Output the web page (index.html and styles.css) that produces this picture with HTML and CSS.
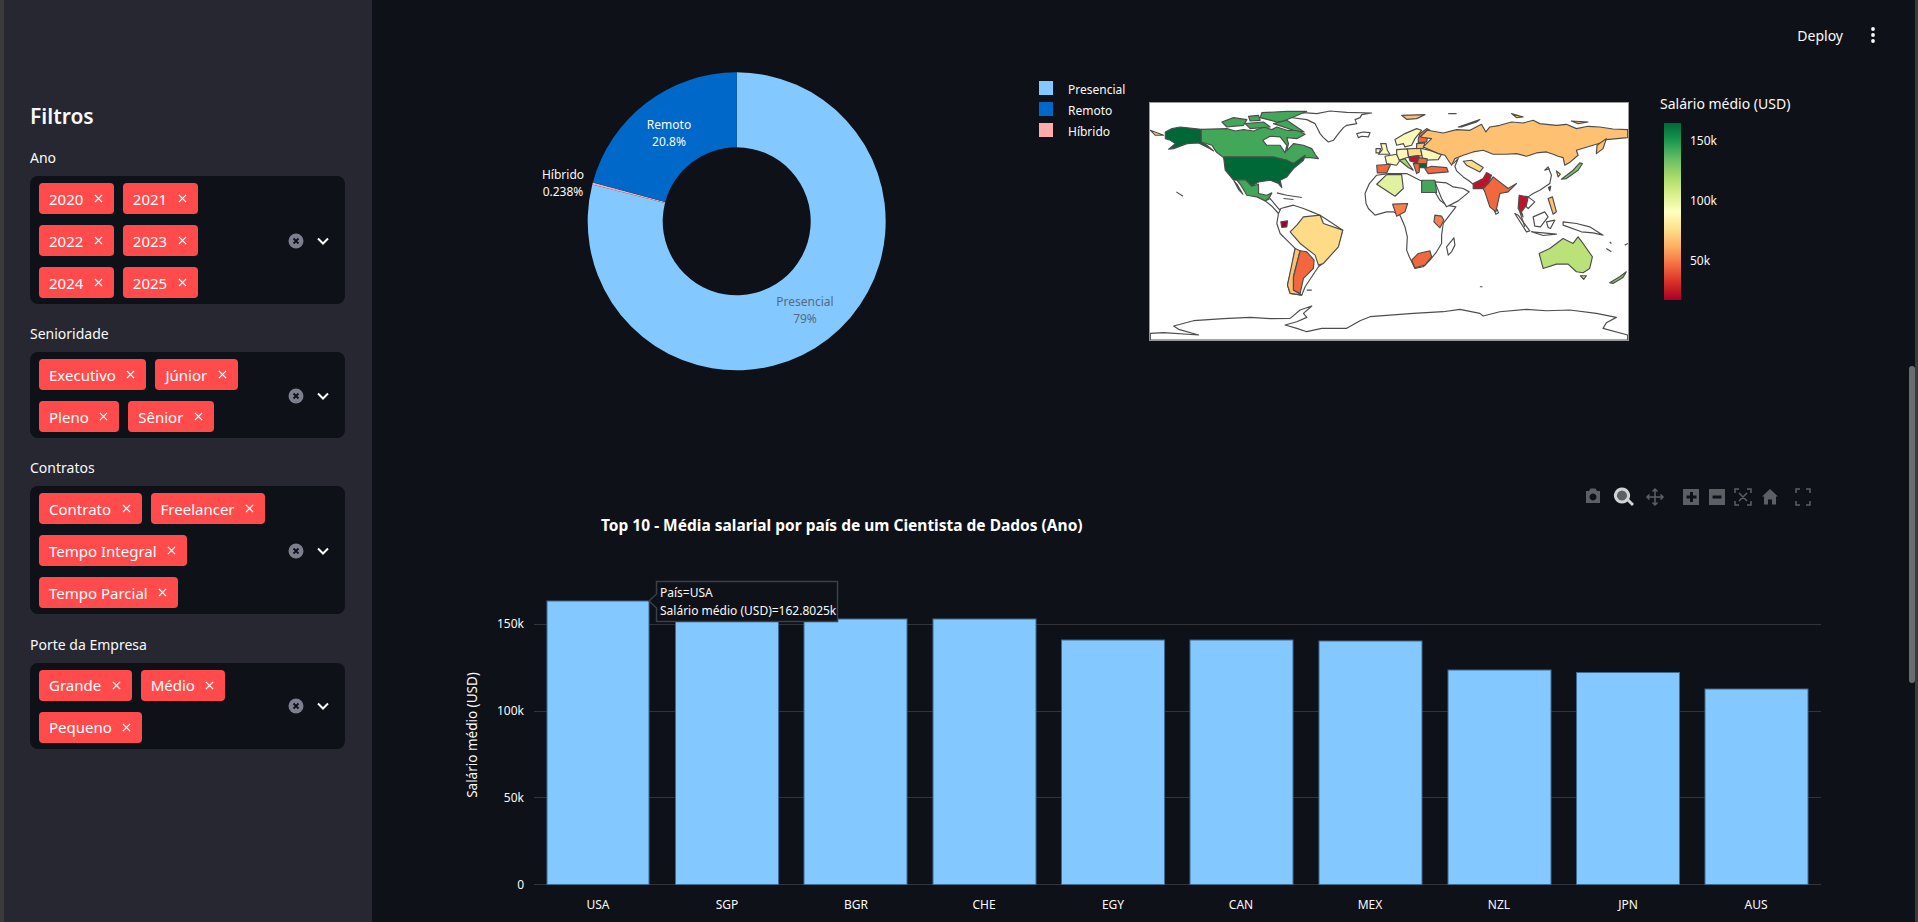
FILE: index.html
```html
<!DOCTYPE html>
<html lang="pt">
<head>
  <meta charset="UTF-8" />
  <meta name="viewport" content="width=device-width, initial-scale=1.0"/>
  <title>Dashboard de Salários</title>
  <link rel="stylesheet" href="styles.css">
</head>
<body>
  <div class="edge"></div>

  <!-- Sidebar -->
  <aside class="sidebar">
    <h2>Filtros</h2>

    <label>Ano</label>
    <div class="select">
      <div class="tags">
        <span class="tag">2020<svg viewBox="0 0 10 10"><path d="M1 1l8 8M9 1l-8 8"/></svg></span>
        <span class="tag">2021<svg viewBox="0 0 10 10"><path d="M1 1l8 8M9 1l-8 8"/></svg></span>
        <span class="tag">2022<svg viewBox="0 0 10 10"><path d="M1 1l8 8M9 1l-8 8"/></svg></span>
        <span class="tag">2023<svg viewBox="0 0 10 10"><path d="M1 1l8 8M9 1l-8 8"/></svg></span>
        <span class="tag">2024<svg viewBox="0 0 10 10"><path d="M1 1l8 8M9 1l-8 8"/></svg></span>
        <span class="tag">2025<svg viewBox="0 0 10 10"><path d="M1 1l8 8M9 1l-8 8"/></svg></span>
      </div>
      <svg class="clear" viewBox="0 0 16 16"><circle cx="8" cy="8" r="7.5"/><path d="M5.5 5.5l5 5M10.5 5.5l-5 5"/></svg>
      <svg class="chevron" viewBox="0 0 14 10"><path d="M2 2.5l5 5 5-5"/></svg>
    </div>

    <label>Senioridade</label>
    <div class="select">
      <div class="tags">
        <span class="tag">Executivo<svg viewBox="0 0 10 10"><path d="M1 1l8 8M9 1l-8 8"/></svg></span>
        <span class="tag">Júnior<svg viewBox="0 0 10 10"><path d="M1 1l8 8M9 1l-8 8"/></svg></span>
        <span class="tag">Pleno<svg viewBox="0 0 10 10"><path d="M1 1l8 8M9 1l-8 8"/></svg></span>
        <span class="tag">Sênior<svg viewBox="0 0 10 10"><path d="M1 1l8 8M9 1l-8 8"/></svg></span>
      </div>
      <svg class="clear" viewBox="0 0 16 16"><circle cx="8" cy="8" r="7.5"/><path d="M5.5 5.5l5 5M10.5 5.5l-5 5"/></svg>
      <svg class="chevron" viewBox="0 0 14 10"><path d="M2 2.5l5 5 5-5"/></svg>
    </div>

    <label>Contratos</label>
    <div class="select">
      <div class="tags">
        <span class="tag">Contrato<svg viewBox="0 0 10 10"><path d="M1 1l8 8M9 1l-8 8"/></svg></span>
        <span class="tag">Freelancer<svg viewBox="0 0 10 10"><path d="M1 1l8 8M9 1l-8 8"/></svg></span>
        <span class="tag">Tempo Integral<svg viewBox="0 0 10 10"><path d="M1 1l8 8M9 1l-8 8"/></svg></span>
        <span class="tag">Tempo Parcial<svg viewBox="0 0 10 10"><path d="M1 1l8 8M9 1l-8 8"/></svg></span>
      </div>
      <svg class="clear" viewBox="0 0 16 16"><circle cx="8" cy="8" r="7.5"/><path d="M5.5 5.5l5 5M10.5 5.5l-5 5"/></svg>
      <svg class="chevron" viewBox="0 0 14 10"><path d="M2 2.5l5 5 5-5"/></svg>
    </div>

    <label>Porte da Empresa</label>
    <div class="select">
      <div class="tags">
        <span class="tag">Grande<svg viewBox="0 0 10 10"><path d="M1 1l8 8M9 1l-8 8"/></svg></span>
        <span class="tag">Médio<svg viewBox="0 0 10 10"><path d="M1 1l8 8M9 1l-8 8"/></svg></span>
        <span class="tag">Pequeno<svg viewBox="0 0 10 10"><path d="M1 1l8 8M9 1l-8 8"/></svg></span>
      </div>
      <svg class="clear" viewBox="0 0 16 16"><circle cx="8" cy="8" r="7.5"/><path d="M5.5 5.5l5 5M10.5 5.5l-5 5"/></svg>
      <svg class="chevron" viewBox="0 0 14 10"><path d="M2 2.5l5 5 5-5"/></svg>
    </div>
  </aside>

  <main class="main">
    <header class="topbar">
      <span class="deploy">Deploy</span>
      <svg class="dots" viewBox="0 0 6 18"><circle cx="3" cy="3" r="1.9"/><circle cx="3" cy="9" r="1.9"/><circle cx="3" cy="15" r="1.9"/></svg>
    </header>

    <div class="chart-row">
      <!-- Donut: viewBox is in page coordinates -->
      <svg class="chart donut" viewBox="440 60 700 320">
        <path class="p1" d="M736.7 72.3A149 149 0 1 1 592.3 184.5L665 203A74 74 0 1 0 736.7 147.3Z"/>
        <path class="p3" d="M592.3 184.5L592.85 182.4L665.26 202L665 203Z"/>
        <path class="p2" d="M592.85 182.4A149 149 0 0 1 736.7 72.3V147.3A74 74 0 0 0 665.26 202Z"/>
        <text class="lbl mid" x="669" y="129">Remoto</text>
        <text class="lbl mid" x="669" y="146">20.8%</text>
        <text class="lbl dim mid" x="805" y="306">Presencial</text>
        <text class="lbl dim mid" x="805" y="323">79%</text>
        <text class="lbl mid" x="563" y="179">Híbrido</text>
        <text class="lbl mid" x="563" y="196">0.238%</text>
        <rect class="p1" x="1039" y="81" width="14" height="14"/>
        <rect class="p2" x="1039" y="102" width="14" height="14"/>
        <rect class="p3" x="1039" y="123" width="14" height="14"/>
        <text class="lbl" x="1068" y="94">Presencial</text>
        <text class="lbl" x="1068" y="115">Remoto</text>
        <text class="lbl" x="1068" y="136">Híbrido</text>
      </svg>

      <!-- Map + colorbar -->
      <svg class="chart" viewBox="1140 60 700 320">
        <defs>
          <linearGradient id="rdylgn" x1="0" y1="1" x2="0" y2="0">
            <stop offset="0" stop-color="#a50026"/>
            <stop offset="0.1" stop-color="#d73027"/>
            <stop offset="0.2" stop-color="#f46d43"/>
            <stop offset="0.3" stop-color="#fdae61"/>
            <stop offset="0.4" stop-color="#fee08b"/>
            <stop offset="0.5" stop-color="#ffffbf"/>
            <stop offset="0.6" stop-color="#d9ef8b"/>
            <stop offset="0.7" stop-color="#a6d96a"/>
            <stop offset="0.8" stop-color="#66bd63"/>
            <stop offset="0.9" stop-color="#1a9850"/>
            <stop offset="1" stop-color="#006837"/>
          </linearGradient>
        </defs>
        <rect class="map-frame" x="1149.5" y="102.5" width="479" height="238"/>
        <svg class="map" x="1150" y="103" width="478" height="237" viewBox="60 68 1434 712">
          <!-- white land -->
          <path d="M470 110L495 100L520 97L560 100L600 92L650 96L725 98L695 103L690 112L675 118L680 130L650 135L640 142L625 160L610 180L595 185L580 172L570 160L560 140L555 130L530 118Z"/>
          <path d="M680 160L700 155L720 157L715 170L695 168L685 172Z"/>
          <path d="M405 362L420 355L445 385L455 395L445 400L425 378Z"/>
          <path d="M445 400L452 385L470 380L490 375L520 385L545 395L570 405L600 425L638 450L625 495L610 515L580 548L565 560L545 590L525 620L515 645L480 640L472 615L485 560L495 505L470 480L450 460L440 430Z"/>
          <path d="M705 340L718 310L740 285L775 280L830 280L870 300L900 310L915 335L930 360L950 375L978 380L955 410L940 430L935 465L935 490L920 515L900 540L880 560L855 565L838 530L830 510L832 470L825 440L810 405L790 395L770 395L735 405L715 385L708 370Z"/>
          <path d="M950 500L972 473L975 495L965 515L955 525Z"/>
          <path d="M915 305L950 308L970 320L1000 325L1018 335L985 362L950 380L935 355Z"/>
          <path d="M1094 392L1102 388L1106 398L1098 402Z"/>
          <path d="M1210 410L1245 395L1255 410L1232 440L1215 438Z"/>
          <path d="M1250 425L1275 420L1262 445L1255 442Z"/>
          <path d="M1300 425L1340 430L1380 440L1420 465L1390 458L1355 455L1300 435Z"/>
          <path d="M1155 400L1165 405L1200 452L1190 455Z"/>
          <path d="M1205 455L1240 458L1280 462L1240 466Z"/>
          <path class="open" d="M970 250L985 235L975 258L980 272L1000 290L1015 300L1030 312M1260 265L1245 270L1255 260L1265 285L1260 310L1230 330L1210 340L1195 350L1215 365L1195 385L1180 370L1170 395L1185 440"/>
          <path class="open" d="M440 338L470 345L515 352M460 355L490 358M138 335L158 348M1440 485L1445 490M1430 505L1445 515M1485 495L1495 490M1050 620H1058M530 630H545M955 100H980"/>
          <!-- Antarctica -->
          <path d="M60 760L100 758L205 765L145 748L130 738L190 722L280 716L360 712L420 716L480 715L510 690L545 678L520 700L530 712L500 725L465 735L500 745L530 755L575 745L650 745L690 722L720 710L850 700L940 695L990 688L1050 700L1060 708L1110 695L1190 688L1250 692L1320 690L1400 700L1460 712L1430 728L1420 745L1494 765V780H60Z"/>

          <!-- Americas -->
          <path class="g1" d="M105 155L125 145L150 140L213 147V185L230 195L250 212L238 205L205 188L170 190L130 205L115 207L135 190L120 180L105 175Z"/>
          <path class="g2" d="M213 147L290 145L315 152L340 148L370 152L400 140L425 148L440 140L470 150L500 150L525 162L500 175L470 172L475 190L470 212L490 190L520 195L545 205L555 222L565 235L540 232L515 232L500 250L478 248L470 240L430 232H280L258 215L245 195L213 185Z"/>
          <path d="M398 180L420 168L450 170L470 195L465 218L450 195L410 195Z"/>
          <path class="g2" d="M395 97L470 93L530 93L495 108L460 122L440 125L390 112Z"/>
          <path class="g2" d="M275 125L310 112L350 118L340 135L290 140Z"/>
          <path class="g2" d="M345 130L400 125L420 140L360 145Z"/>
          <path class="g2" d="M430 130L470 120L522 155L490 150Z"/>
          <path class="g2" d="M355 108L385 105L390 120L360 122Z"/>
          <path class="g1" d="M280 230H430L470 240L490 250L525 225L520 240L490 265L470 290L450 300L455 322L445 310L420 300L385 305L365 318L340 298L310 300L285 270Z"/>
          <path class="g2" d="M320 300L345 298L365 318L385 312L385 340L410 345L425 338L418 352L405 362L380 350L350 345L332 315Z"/>
          <path class="g2" d="M312 303L322 315L338 342L325 328Z"/>
          <path class="y3" d="M480 455L500 435L520 410L570 405L580 430L638 450L625 500L580 550L565 555L555 525L510 490Z"/>
          <path class="o3" d="M495 505L510 512L490 590L490 630L515 645L480 640L472 615Z"/>
          <path class="o1" d="M510 512L530 515L552 540L550 565L520 595L510 640L490 630L490 590Z"/>
          <path class="r1" d="M452 425L472 422L470 440L455 442Z"/>

          <!-- Africa -->
          <path class="y1" d="M740 312L770 283L815 283L820 325L795 348Z"/>
          <path class="g2" d="M875 300H915L920 337H875Z"/>
          <path class="o2" d="M788 372L833 370L825 395L800 408Z"/>
          <path class="o2" d="M915 405L935 408L942 420L930 443L912 425Z"/>
          <path class="o1" d="M845 540L865 520L900 512L905 530L885 555L855 563Z"/>

          <!-- Europe -->
          <path class="o1" d="M740 255L782 252L770 278H742Z"/>
          <path class="y2" d="M765 228L800 222L810 240L800 255L770 250Z"/>
          <path class="y2" d="M752 190L768 190L772 210L780 222L745 222L757 208Z"/>
          <path class="y2" d="M738 205H752L748 218H738Z"/>
          <path class="y2" d="M800 208L832 206L836 230L808 240L800 222Z"/>
          <path class="y3" d="M832 206L872 204L876 226L836 230Z"/>
          <path class="o3" d="M860 190L885 188L880 204L860 205Z"/>
          <path class="y2" d="M876 226L872 204L905 212L935 222L925 238L880 240Z"/>
          <path class="y2" d="M795 178L825 160L860 145L875 150L855 175L845 195L825 200L820 190L800 195Z"/>
          <path class="o1" d="M865 175L870 160L890 145L900 150L893 170L890 185L865 188Z"/>
          <path class="g3" d="M808 240L825 235L850 270L835 262Z"/>
          <path class="r2" d="M836 230L866 226L870 238L860 248L840 242Z"/>
          <path class="o1" d="M866 232L892 236L890 250L862 250Z"/>
          <path class="g1" d="M868 250H890V262H868Z"/>
          <path class="o1" d="M850 250L868 250L868 275L860 280Z"/>
          <path class="o1" d="M885 265L905 258L950 262L955 275L895 280Z"/>
          <path class="o3" d="M815 105L885 103L860 115L830 117Z"/>
          <path class="o3" d="M985 140L1050 118L1040 125L995 140Z"/>

          <!-- Russia and Asia -->
          <path class="o3" d="M892 150L940 158L980 148L1020 150L1055 132L1068 155L1080 140L1110 135L1145 125L1180 128L1210 120L1230 130L1280 135L1310 132L1340 145L1375 138L1410 140L1450 146L1494 148V172L1430 178L1420 186L1390 195L1340 210L1345 225L1322 245L1305 255L1300 232L1285 228L1270 222L1250 215L1220 218L1190 228L1160 220L1130 222L1090 222L1060 210L1030 215L1000 225L975 235L965 255L945 225L925 220L880 200L905 175L870 170Z"/>
          <path class="o3" d="M1400 220L1402 195L1430 175L1420 205Z"/>
          <path class="o3" d="M1145 100L1180 110L1160 112Z"/>
          <path class="o3" d="M1325 122L1375 125L1345 130Z"/>
          <path class="o3" d="M60 150L100 165L75 165Z"/>
          <path class="y3" d="M1000 243L1025 240L1060 262L1050 275L1010 255Z"/>
          <path class="r2" d="M1030 310L1060 295L1070 277L1085 285L1075 310L1060 325H1030Z"/>
          <path class="o1" d="M1060 325L1075 310L1090 290L1135 325L1160 310L1135 335L1110 340L1098 395L1080 380L1065 335Z"/>
          <path class="r2" d="M1168 345L1195 350L1190 375L1175 395L1180 410L1165 385Z"/>
          <path class="g4" d="M1295 297L1330 270L1350 248L1358 250L1345 270L1310 295Z"/>
          <path class="y3" d="M1280 272L1292 282L1285 290Z"/>
          <path class="o3" d="M1255 355L1268 350L1280 395L1270 402Z"/>
          <path class="r2" d="M1256 322L1263 318L1260 332Z"/>

          <!-- Oceania -->
          <path class="g5" d="M1228 520L1260 505L1300 475L1330 490L1345 470L1360 490L1388 530L1380 565L1360 578L1340 575L1315 552L1280 552L1240 565Z"/>
          <path class="g5" d="M1352 587H1370L1362 598Z"/>
          <path class="g4" d="M1440 608L1470 590L1490 575L1480 592L1450 610Z"/>
        </svg>

        <text class="cbar-title" x="1660" y="109">Salário médio (USD)</text>
        <rect class="cbar" x="1664" y="123" width="17" height="177"/>
        <text class="lbl" x="1690" y="145">150k</text>
        <text class="lbl" x="1690" y="205">100k</text>
        <text class="lbl" x="1690" y="265">50k</text>
      </svg>
    </div>

    <!-- Bar chart -->
    <svg class="chart bars" viewBox="440 470 1400 452">
      <g class="modebar">
        <path d="M1586 491h3l1.5-2.500h5l1.500 2.500h3v12h-14zM1593 493.500a3.500 3.500 0 1 0 .01 0z"/>
        <path class="active" d="M1622 489a6.500 6.500 0 1 1-.01 0zM1628 500l5 5" />
        <path class="line" d="M1655 489v16M1647 497h16M1652.500 491.500l2.500-2.500 2.500 2.500M1652.500 502.500l2.500 2.500 2.500-2.500M1649.500 494.500l-2.500 2.500 2.500 2.500M1660.500 494.500l2.500 2.500-2.500 2.500"/>
        <path fill-rule="evenodd" d="M1683 489h16v16h-16zM1690 492v3.500h-3.500v3h3.500v3.500h3v-3.500h3.500v-3h-3.500v-3.500z"/>
        <path fill-rule="evenodd" d="M1709 489h16v16h-16zM1712.500 495.500v3h9v-3z"/>
        <path class="line" d="M1735 493v-4h4M1747 489h4v4M1751 501v4h-4M1739 505h-4v-4M1739 493l8 8M1747 493l-8 8"/>
        <path d="M1770 489l8 7.500h-2v8h-4v-5h-4v5h-4v-8h-2z"/>
        <path class="line" d="M1796 493v-4h4M1806 489h4v4M1810 501v4h-4M1800 505h-4v-4"/>
      </g>

      <text class="bar-title" x="601" y="531">Top 10 - Média salarial por país de um Cientista de Dados (Ano)</text>

      <path class="grid" d="M534 624.500H1821M534 711.500H1821M534 797.500H1821M534 884.500H1821"/>

      <rect class="bar" x="547" y="601" width="102" height="283.500"/>
      <rect class="bar" x="675.500" y="619" width="103" height="265.500"/>
      <rect class="bar" x="804" y="619" width="103" height="265.500"/>
      <rect class="bar" x="933" y="619" width="103" height="265.500"/>
      <rect class="bar" x="1061.500" y="640" width="103" height="244.500"/>
      <rect class="bar" x="1190" y="640" width="103" height="244.500"/>
      <rect class="bar" x="1319" y="641" width="103" height="243.500"/>
      <rect class="bar" x="1448" y="670" width="103" height="214.500"/>
      <rect class="bar" x="1576.500" y="672.500" width="103" height="212"/>
      <rect class="bar" x="1705" y="689" width="103" height="195.500"/>

      <text class="lbl end" x="524" y="628">150k</text>
      <text class="lbl end" x="524" y="715">100k</text>
      <text class="lbl end" x="524" y="802">50k</text>
      <text class="lbl end" x="524" y="889">0</text>

      <text class="lbl mid" x="598" y="909">USA</text>
      <text class="lbl mid" x="727" y="909">SGP</text>
      <text class="lbl mid" x="856" y="909">BGR</text>
      <text class="lbl mid" x="984" y="909">CHE</text>
      <text class="lbl mid" x="1113" y="909">EGY</text>
      <text class="lbl mid" x="1241" y="909">CAN</text>
      <text class="lbl mid" x="1370" y="909">MEX</text>
      <text class="lbl mid" x="1499" y="909">NZL</text>
      <text class="lbl mid" x="1628" y="909">JPN</text>
      <text class="lbl mid" x="1756" y="909">AUS</text>

      <text class="axis-title" transform="translate(477 735) rotate(-90)">Salário médio (USD)</text>

      <!-- hover label -->
      <path class="hover" d="M649 601L656.500 594V581.500H837.500V621.500H656.500V608Z"/>
      <text class="lbl" x="660" y="597">País=USA</text>
      <text class="lbl" x="660" y="615">Salário médio (USD)=162.8025k</text>
    </svg>

    <div class="scrollbar"></div>
  </main>

  <div class="edge edge-right"></div>
</body>
</html>
```

FILE: styles.css
```css
body {
  margin: 0;
  height: 922px;
  overflow: hidden;
  display: flex;
  background-color: #0e1117;
  color: #fafafa;
  font-family: "Noto Sans", sans-serif;
}
.edge {
  width: 4px;
  flex: none;
  background-color: #3a3a3a;
}
.edge-right {
  width: 3px;
}

/* sidebar */
.sidebar {
  width: 368px;
  flex: none;
  box-sizing: border-box;
  padding: 102px 27px 0 26px;
  background-color: #262730;
}
.sidebar h2 {
  margin: 0 0 18px;
  font-size: 21px;
  line-height: 28px;
  font-weight: 600;
}
.sidebar label {
  display: block;
  font-size: 14px;
  line-height: 20px;
  margin-bottom: 8px;
}
.select {
  display: flex;
  align-items: center;
  padding: 7px 0 6px 9px;
  margin-bottom: 20.2px;
  border-radius: 8px;
  background-color: #0e1117;
}
.tags {
  width: 232px;
  flex: none;
  display: flex;
  flex-wrap: wrap;
  gap: 11px 9px;
}
.tag {
  display: flex;
  align-items: center;
  height: 31px;
  padding: 0 11px 0 10px;
  border-radius: 4px;
  background-color: #ff4b4b;
  color: #fff;
  font-size: 15px;
}
.tag svg {
  width: 9px;
  height: 9px;
  margin-left: 10.5px;
  stroke: #fff;
  stroke-width: 1.4;
  fill: none;
}
.clear {
  width: 16px;
  height: 16px;
  margin-left: 17px;
}
.clear circle {
  fill: #7d7f8e;
}
.clear path {
  stroke: #0e1117;
  stroke-width: 1.8;
  fill: none;
}
.chevron {
  width: 14px;
  height: 10px;
  margin-left: 12px;
  stroke: #fff;
  stroke-width: 2;
  fill: none;
}

/* main */
.main {
  flex: 1;
  min-width: 0;
  position: relative;
  padding-left: 68px;
}
.topbar {
  height: 60px;
  margin-left: -68px;
  display: flex;
  justify-content: flex-end;
  align-items: center;
  padding: 10px 39px 0 0;
  box-sizing: border-box;
}
.deploy {
  font-size: 14px;
  margin-right: 27px;
}
.dots {
  width: 6px;
  height: 18px;
  fill: #fafafa;
}
.chart-row {
  display: flex;
  height: 320px;
}
.chart {
  display: block;
  width: 700px;
  height: 320px;
  flex: none;
}
.bars {
  width: 1400px;
  height: 452px;
  margin-top: 90px;
}
.scrollbar {
  position: absolute;
  top: 366px;
  right: 0;
  width: 6px;
  height: 317px;
  border-radius: 3px;
  background-color: #6b6c70;
}

/* plot parts */
.p1 { fill: #83c9ff; }
.p2 { fill: #0068c9; }
.p3 { fill: #ffabab; }
.lbl {
  fill: #fafafa;
  font-size: 12px;
}
.dim { fill: #5a6a7c; }
.mid { text-anchor: middle; }
.end { text-anchor: end; }
.cbar-title {
  fill: #fafafa;
  font-size: 14px;
}
.axis-title {
  fill: #fafafa;
  font-size: 13.5px;
  text-anchor: middle;
}
.bar-title {
  fill: #fff;
  font-size: 15.5px;
  font-weight: 700;
}
.cbar { fill: url(#rdylgn); }
.map-frame {
  fill: #fff;
  stroke: #999;
}
.map path {
  fill: #fff;
  stroke: #4d4d4d;
  stroke-width: 3.5;
  stroke-linejoin: round;
}
.map path.open { fill: none; }
.map path.g1 { fill: #006837; }
.map path.g2 { fill: #43a75a; }
.map path.g3 { fill: #a6d96a; }
.map path.g4 { fill: #80c763; }
.map path.g5 { fill: #bbe278; }
.map path.y1 { fill: #e2f1a0; }
.map path.y2 { fill: #fdf8b8; }
.map path.y3 { fill: #fedb87; }
.map path.o1 { fill: #f1683e; }
.map path.o2 { fill: #f97f4b; }
.map path.o3 { fill: #fdc171; }
.map path.r1 { fill: #a50026; }
.map path.r2 { fill: #c0122a; }
.grid {
  stroke: #31343b;
  fill: none;
}
.bar {
  fill: #83c9ff;
  stroke: #3f6a90;
}
.hover {
  fill: #0e1117;
  stroke: #3a3f48;
  stroke-width: 1.5;
}
.modebar path {
  fill: #5c5f64;
}
.modebar path.line {
  fill: none;
  stroke: #5c5f64;
  stroke-width: 1.5;
}
.modebar path.active {
  fill: #5c5f64;
  stroke: #d0d2d4;
  stroke-width: 3;
}
```
